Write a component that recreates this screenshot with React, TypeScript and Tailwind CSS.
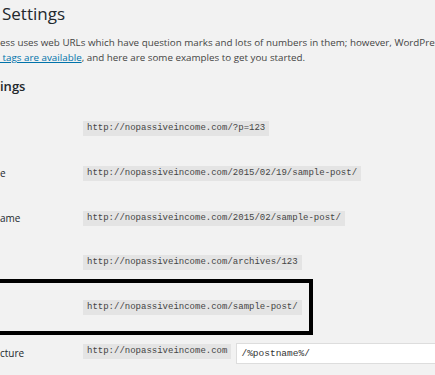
const sans = "font-['Open_Sans',_'Liberation_Sans',_sans-serif]";
const mono = "font-['Liberation_Mono',_'DejaVu_Sans_Mono',_monospace]";

type Row = { label: string; url: string; h: string; marked?: boolean };

const rows: Row[] = [
  { label: "", url: "http://nopassiveincome.com/?p=123", h: "h-[45px]" },
  { label: "e", url: "http://nopassiveincome.com/2015/02/19/sample-post/", h: "h-[45px]" },
  { label: "ame", url: "http://nopassiveincome.com/2015/02/sample-post/", h: "h-[44px]" },
  { label: "", url: "http://nopassiveincome.com/archives/123", h: "h-[45px]" },
  { label: "", url: "http://nopassiveincome.com/sample-post/", h: "h-[45px]", marked: true },
];

function Code({ children }: { children: string }) {
  return (
    <code className={`${mono} bg-[#e4e4e4] px-[4px] text-[9px] leading-[15px] text-[#444] whitespace-pre`}>
      {children}
    </code>
  );
}

export default function App() {
  return (
    <div className={`${sans} h-[375px] w-[435px] overflow-hidden bg-[#f2f2f2]`}>
      <h1 className="whitespace-nowrap pl-[2px] pt-[3px] text-[17px] leading-[22px] font-normal text-[#23282d]">
        Settings
      </h1>

      <div className="mt-[10px] whitespace-nowrap text-[9.8px] leading-[15px] text-[#444]">
        <p>
          ess uses web URLs which have question marks and lots of numbers in them; however, WordPress offers you the
          ability to create a custom URL structure
        </p>
        <p className="whitespace-pre">
          <a href="#" className="text-[#0073aa] underline">
            {" tags are available"}
          </a>
          , and here are some examples to get you started.
        </p>
      </div>

      <h2 className="mt-[12px] whitespace-nowrap text-[13px] leading-[18px] font-semibold text-[#23282d]">ings</h2>

      <div className="mt-[11px] flex flex-col">
        {rows.map((r) => (
          <div key={r.url} className={`relative flex items-center ${r.h}`}>
            <div className="w-[83px] shrink-0 whitespace-nowrap text-[10px] text-[#23282d]">{r.label}</div>
            <Code>{r.url}</Code>
            {r.marked && (
              <div className="pointer-events-none absolute left-[-10px] top-[-6px] h-[56px] w-[323px] border-4 border-black" />
            )}
          </div>
        ))}

        <div className="flex items-center pt-[13px]">
          <div className="w-[83px] shrink-0 whitespace-nowrap text-[10px] text-[#23282d]">cture</div>
          <div className="flex items-start gap-[5px]">
            <span className="flex h-[16px] items-center">
              <Code>http://nopassiveincome.com</Code>
            </span>
            <input
              readOnly
              value="/%postname%/"
              className={`${mono} h-[21px] w-[260px] border border-[#dddddd] bg-white px-[4px] text-[9.5px] text-[#333] outline-none`}
            />
          </div>
        </div>
      </div>
    </div>
  );
}
